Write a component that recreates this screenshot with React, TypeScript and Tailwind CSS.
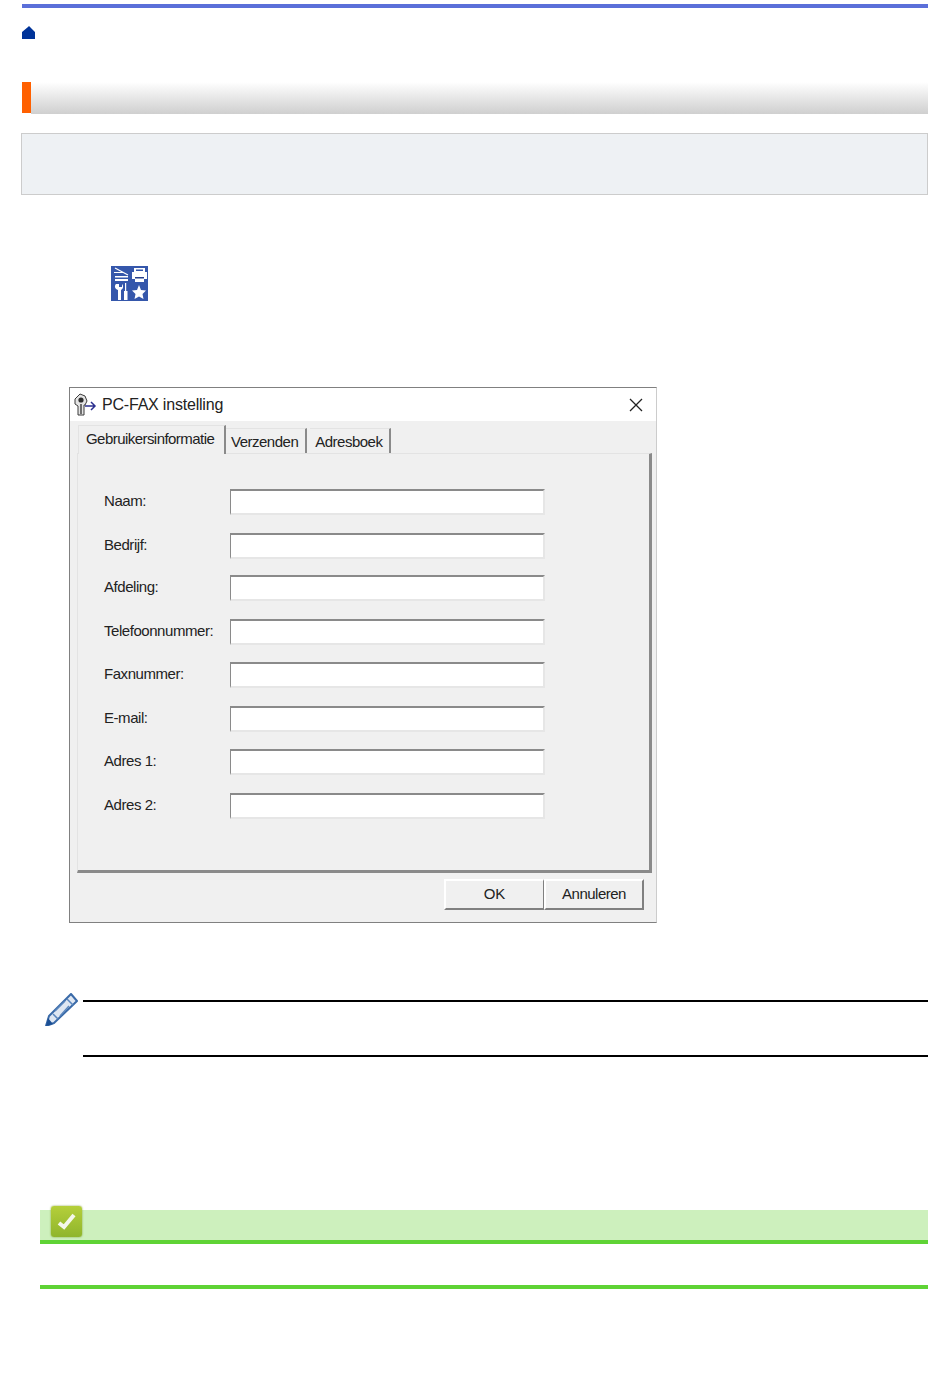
import React from "react";

const rows = [
  { label: "Naam:", cls: "mt-[35px]" },
  { label: "Bedrijf:", cls: "mt-[18px]" },
  { label: "Afdeling:", cls: "mt-[16px]" },
  { label: "Telefoonnummer:", cls: "mt-[18px]" },
  { label: "Faxnummer:", cls: "mt-[17px]" },
  { label: "E-mail:", cls: "mt-[18px]" },
  { label: "Adres 1:", cls: "mt-[17px]" },
  { label: "Adres 2:", cls: "mt-[18px]" },
];

const HomeIcon = () => (
  <svg width="14" height="14" viewBox="0 0 14 14" className="block">
    <path d="M7 0 L8 1 L13 6 L13 13 L0 13 L0 6 L6 1 Z" fill="#003399" />
  </svg>
);

const SettingsIcon = () => (
  <svg width="37" height="35" viewBox="0 0 37 35" className="block ml-[89px]">
    <rect width="37" height="35" fill="#3557ab" />
    {/* scanner */}
    <path d="M4 2 L17 9 M3 6.5 L12 6.5" stroke="#fff" strokeWidth="1.2" fill="none" />
    <path d="M4 10 L17 10 L17 11.5 L4 11.5 Z" fill="#fff" />
    <rect x="4" y="13" width="13" height="2" fill="#fff" />
    {/* printer */}
    <path d="M23 2 H34 V6 H23 Z" fill="#fff" />
    <rect x="25" y="3.5" width="7" height="1.5" fill="#3557ab" />
    <path d="M21 6 H36 V13 H33 V16 H24 V13 H21 Z" fill="#fff" />
    <rect x="24" y="11" width="9" height="1.5" fill="#27418c" />
    {/* wrench and screwdriver */}
    <path d="M5 18 C3 20 4 23 7 24 V34 H10 V24 C12 23 13 20 11 18 V21 H8 V18 Z" fill="#fff" />
    <rect x="14" y="17" width="1.2" height="8" fill="#fff" />
    <rect x="13" y="25" width="3.5" height="9" fill="#fff" />
    {/* star */}
    <path d="M28 19 L30 24 L35 24.5 L31.5 28 L32.5 33 L28 30.5 L23.5 33 L24.5 28 L21 24.5 L26 24 Z" fill="#fff" />
  </svg>
);

const FaxIcon = () => (
  <svg width="24" height="24" viewBox="0 0 24 24" className="block shrink-0">
    <path d="M1 6 L6 1 L11 3 L13 8 L11 12 L10 12 L10 22 L4 22 L4 13 L1 11 Z" fill="#e4e4e4" stroke="#3a3a3a" strokeWidth="1" />
    <circle cx="7" cy="7" r="2.6" fill="#2e2e2e" />
    <path d="M7 11 V21" stroke="#6e6e6e" strokeWidth="2" />
    <path d="M11 13 H21 M17 9 L21 13 L17 17" stroke="#2b2f8f" strokeWidth="1.5" fill="none" />
  </svg>
);

const PencilIcon = () => (
  <svg width="33" height="33" viewBox="0 0 33 33" className="block shrink-0">
    <path d="M26 1 L32 8 L9 30 L1 33 L4 23 Z" fill="#dfe7f2" stroke="#3a6aa8" strokeWidth="2" strokeLinejoin="round" />
    <path d="M22 6 L28 12 M8 21 L13 26 M20 8 L10 18 M24 13 L15 23" stroke="#5a86bd" strokeWidth="1.5" fill="none" />
    <path d="M1 33 L3 25 L8 31 Z" fill="#1b4f94" />
  </svg>
);

const CheckIcon = () => (
  <div className="w-[31px] h-[31px] rounded-[3px] bg-gradient-to-b from-[#b5cf3a] to-[#8fb52c] shadow-[0_0_2px_#7f9a30] flex items-center justify-center">
    <svg width="22" height="20" viewBox="0 0 22 20">
      <path d="M3 11 L8 15 L18 3" stroke="#f4f7ea" strokeWidth="4" fill="none" />
    </svg>
  </div>
);

const Tab = ({ label, active }: { label: string; active?: boolean }) =>
  active ? (
    <div className="w-[148px] h-[29px] -mb-px ml-px relative z-10 bg-[#f0f0f0] border-t border-l border-[#e3e3e3] border-r-2 border-r-[#8a8a8a] pl-[7px] pt-[3px] text-[15px] leading-[20px] text-[#222] tracking-[-0.55px]">
      {label}
    </div>
  ) : (
    <div className="h-[25px] mt-[3px] bg-[#f0f0f0] border-t border-[#e3e3e3] border-r-2 border-r-[#8a8a8a] pl-[5px] pr-[7px] pt-[3px] text-[15px] leading-[20px] text-[#222] tracking-[-0.5px]">
      {label}
    </div>
  );

export default function App() {
  return (
    <div className="w-[950px] h-[1387px] bg-white pl-[22px] pr-[22px] pt-[4px] font-['Liberation_Sans',sans-serif] overflow-hidden">
      <div className="h-[4px] bg-[#5b6fd9]" />
      <div className="mt-[18px]">
        <HomeIcon />
      </div>

      <div className="mt-[42px] h-[32px] flex">
        <div className="w-[9px] h-[31px] bg-[#ff6000]" />
        <div className="flex-1 bg-gradient-to-b from-white to-[#cfcfcf]" />
      </div>

      <div className="mt-[19px] -ml-px h-[62px] bg-[#eef1f4] border border-[#cccccc]" />

      <div className="mt-[71px]">
        <SettingsIcon />
      </div>

      {/* dialog */}
      <div className="mt-[86px] ml-[47px] w-[588px] h-[536px] bg-[#f0f0f0] border-l border-b border-[#808080] border-t border-r border-r-[#cccccc] flex flex-col">
        <div className="h-[33px] bg-white flex items-center pl-[4px] pr-[13px] shrink-0">
          <FaxIcon />
          <span className="ml-[4px] text-[16px] text-[#222] tracking-[-0.2px]">PC-FAX instelling</span>
          <svg width="14" height="14" viewBox="0 0 14 14" className="ml-auto">
            <path d="M1 1 L13 13 M13 1 L1 13" stroke="#222" strokeWidth="1.3" />
          </svg>
        </div>

        <div className="flex pl-[7px] mt-[4px] shrink-0">
          <Tab label="Gebruikersinformatie" active />
          <Tab label="Verzenden" />
          <div className="w-[6px]" />
          <div className="-ml-[3px]">
            <Tab label="Adresboek" />
          </div>
        </div>

        <div className="ml-[7px] w-[575px] h-[420px] border-t border-l border-[#e3e3e3] border-r-[3px] border-r-[#8a8a8a] border-b-[3px] border-b-[#8a8a8a] pl-[26px] shrink-0">
          {rows.map((row) => (
            <div key={row.label} className={`flex items-center h-[26px] ${row.cls}`}>
              <span className="w-[126px] text-[15px] text-[#222] tracking-[-0.45px] -mt-[1px]">{row.label}</span>
              <div className="w-[315px] h-[26px] bg-white border-t-2 border-l border-[#8a8a8a] border-r-2 border-r-[#e6e6e6] border-b-2 border-b-[#e6e6e6]" />
            </div>
          ))}
        </div>

        <div className="flex justify-end mt-[6px] pr-[12px]">
          <button className="w-[100px] h-[31px] bg-[#f0f0f0] border-t-2 border-l-2 border-white border-r border-b-2 border-r-[#808080] border-b-[#808080] text-[15px] text-[#222] leading-none pb-[2px]">
            OK
          </button>
          <button className="w-[100px] h-[31px] bg-[#f0f0f0] border-t-2 border-l-2 border-white border-r-2 border-b-2 border-r-[#808080] border-b-[#808080] text-[15px] text-[#222] leading-none tracking-[-0.5px] pb-[2px]">
            Annuleren
          </button>
        </div>
      </div>

      {/* note */}
      <div className="mt-[70px] ml-[23px] flex gap-[5px]">
        <PencilIcon />
        <div className="flex-1 mt-[7px] h-[57px] border-t-2 border-b-2 border-black" />
      </div>

      {/* related */}
      <div className="mt-[153px] ml-[18px] h-[34px] bg-[#cdf0bd] border-b-4 border-[#5fd335] relative">
        <div className="absolute left-[11px] -top-[4px]">
          <CheckIcon />
        </div>
      </div>
      <div className="mt-[41px] ml-[18px] h-[4px] bg-[#5fd335]" />
    </div>
  );
}
